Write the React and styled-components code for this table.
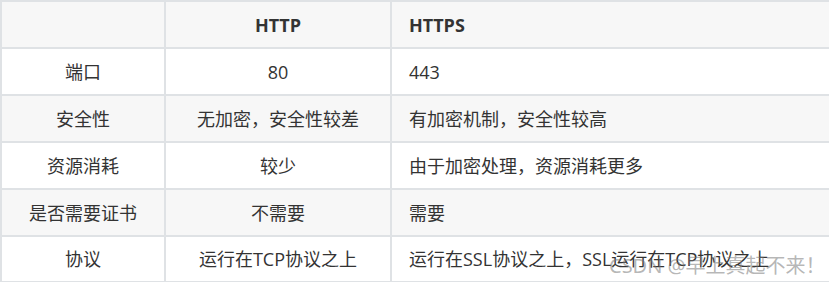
import styled, { createGlobalStyle } from "styled-components";

const GlobalStyle = createGlobalStyle`
  html, body {
    margin: 0;
    padding: 0;
    background: #fff;
    overflow: hidden;
  }
`;

const Wrap = styled.div`
  position: relative;
  width: 829px;
  height: 282px;
  overflow: hidden;
`;

const Table = styled.table`
  border-collapse: collapse;
  width: 880px;
  table-layout: fixed;
  font-family: "Open Sans", "Noto Sans CJK SC", sans-serif;
  font-size: 18px;
  color: #333;
`;

const Row = styled.tr`
  height: ${(props) => props.h}px;
  background-color: ${(props) => (props.striped ? "#f7f7f7" : "#fff")};
`;

const Cell = styled.td`
  border: 2px solid #dfe2e5;
  padding: 0 17px;
  text-align: ${(props) => (props.left ? "left" : "center")};
  font-weight: ${(props) => (props.head ? 700 : 400)};
  white-space: nowrap;
  line-height: 1;
`;

const Watermark = styled.div`
  position: absolute;
  left: 609px;
  top: 250px;
  font-family: "Noto Sans", "Noto Sans CJK SC", sans-serif;
  font-size: 20px;
  color: rgba(120, 120, 120, 0.55);
  white-space: nowrap;
  pointer-events: none;
`;

const rows = [
  ["端口", "80", "443"],
  ["安全性", "无加密，安全性较差", "有加密机制，安全性较高"],
  ["资源消耗", "较少", "由于加密处理，资源消耗更多"],
  ["是否需要证书", "不需要", "需要"],
  ["协议", "运行在TCP协议之上", "运行在SSL协议之上，SSL运行在TCP协议之上"],
];

const heights = [47, 47, 47, 47, 46];

export default function App() {
  return (
    <>
      <GlobalStyle />
      <Wrap>
        <Table>
          <colgroup>
            <col style={{ width: 164 }} />
            <col style={{ width: 226 }} />
            <col />
          </colgroup>
          <tbody>
            <Row h={47} striped>
              <Cell head></Cell>
              <Cell head>HTTP</Cell>
              <Cell head left>
                HTTPS
              </Cell>
            </Row>
            {rows.map((r, i) => (
              <Row key={r[0]} h={heights[i]} striped={i % 2 === 1}>
                <Cell>{r[0]}</Cell>
                <Cell>{r[1]}</Cell>
                <Cell left>{r[2]}</Cell>
              </Row>
            ))}
          </tbody>
        </Table>
        <Watermark>CSDN @早上真起不来！</Watermark>
      </Wrap>
    </>
  );
}
